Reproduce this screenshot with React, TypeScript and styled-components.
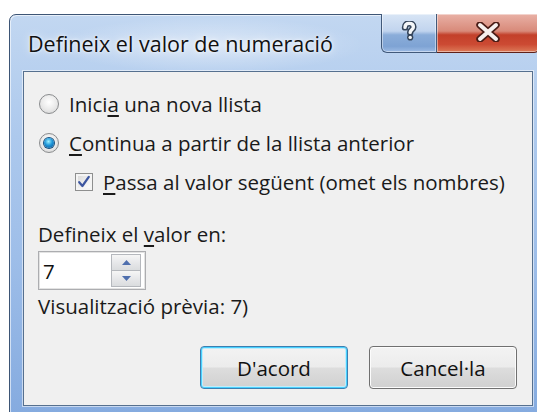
import React from 'react';
import styled, { createGlobalStyle } from 'styled-components';

const uiFont = `'Open Sans', 'Noto Sans', 'Liberation Sans', sans-serif`;

const GlobalStyle = createGlobalStyle`
  html, body {
    margin: 0;
    padding: 0;
    background: #ffffff;
    overflow: hidden;
  }
  body {
    font-family: ${uiFont};
  }
`;

const Window = styled.div`
  box-sizing: border-box;
  width: 538px;
  height: 406px;
  margin: 14px 0 0 9px;
  display: flex;
  flex-direction: column;
  border: 1px solid #3d5575;
  border-radius: 7px 7px 0 0;
  background:
    radial-gradient(ellipse 220px 40px at 200px 30px, rgba(255, 255, 255, 0.45), rgba(255, 255, 255, 0) 70%),
    linear-gradient(180deg, #c2d7f1 0%, #adc9ed 30%, #9ebee9 60%, #84aadf 100%);
  box-shadow: inset 1px 1px 0 rgba(255, 255, 255, 0.6);
`;

const TitleBar = styled.div`
  height: 56px;
  display: flex;
  align-items: flex-start;
  padding-left: 18px;
`;

const Title = styled.div`
  align-self: center;
  font-size: 21.5px;
  color: #111;
  text-shadow: 0 0 8px rgba(255, 255, 255, 0.9), 0 0 3px rgba(255, 255, 255, 0.9);
  margin-top: 1px;
  white-space: nowrap;
`;

const Controls = styled.div`
  margin-left: auto;
  margin-right: 6px;
  display: flex;
  margin-top: -1px;
`;

const CaptionButton = styled.div<{ $w: number; $tone: 'blue' | 'red' }>`
  box-sizing: border-box;
  width: ${(p) => p.$w}px;
  height: 39px;
  padding-bottom: 3px;
  display: flex;
  align-items: center;
  justify-content: center;
  border: 1px solid ${(p) => (p.$tone === 'red' ? '#5f2018' : '#41597a')};
  border-top: none;
  background: ${(p) =>
    p.$tone === 'red'
      ? 'linear-gradient(180deg, #e9b1a6 0%, #d88a7a 45%, #c3402a 55%, #cc4a33 80%, #dc7a58 100%)'
      : 'linear-gradient(180deg, #d8e5f5 0%, #c1d4ee 45%, #8badd9 55%, #7ea3d4 85%, #9dbbe4 100%)'};
  box-shadow: inset 0 0 0 1px rgba(255, 255, 255, 0.45);
  &:first-child {
    border-radius: 0 0 0 6px;
  }
  &:last-child {
    border-radius: 0 0 6px 0;
    border-left: none;
  }
`;

const Client = styled.div`
  box-sizing: border-box;
  margin: 0 13px 13px 13px;
  flex: 1;
  border: 1px solid #56708f;
  background: #f0f0f0;
  box-shadow: 0 0 0 1px rgba(255, 255, 255, 0.55);
  display: flex;
  flex-direction: column;
  padding: 12px 15px 16px 14px;
  font-size: 20.5px;
  color: #1a1a1a;
`;

const OptionRow = styled.label<{ $indent?: number }>`
  height: 39px;
  display: flex;
  align-items: center;
  gap: 10px;
  padding-left: ${(p) => p.$indent ?? 1}px;
  white-space: nowrap;
`;

const RadioDot = styled.span<{ $on?: boolean }>`
  box-sizing: border-box;
  width: 20px;
  height: 20px;
  border-radius: 50%;
  border: 1px solid #8a8c8e;
  background: radial-gradient(circle at 50% 40%, #ffffff 0%, #e9e9e9 55%, #cfcfcf 100%);
  display: flex;
  align-items: center;
  justify-content: center;
  flex-shrink: 0;
  &::after {
    content: '';
    display: ${(p) => (p.$on ? 'block' : 'none')};
    width: 10px;
    height: 10px;
    border-radius: 50%;
    background: radial-gradient(circle at 45% 35%, #9ef0ff 0%, #1e96d8 45%, #0b4f92 100%);
    box-shadow: 0 0 0 1px #17507f;
  }
`;

const CheckBox = styled.span`
  box-sizing: border-box;
  width: 18px;
  height: 18px;
  border: 1px solid #8e8f8f;
  background: linear-gradient(135deg, #d5d5d5 0%, #f2f2f2 60%, #ffffff 100%);
  box-shadow: inset 0 0 0 2px #f4f4f4;
  display: flex;
  align-items: center;
  justify-content: center;
  flex-shrink: 0;
`;

const Key = styled.span`
  text-decoration: underline;
  text-underline-offset: 3px;
`;

const FieldLabel = styled.div`
  margin-top: 21px;
  height: 24px;
  line-height: 24px;
`;

const Spinner = styled.div`
  box-sizing: border-box;
  margin-top: 5px;
  width: 108px;
  height: 39px;
  border: 1px solid #acadb0;
  background: #ffffff;
  box-shadow: inset 0 0 0 1px #e3e3e3;
  display: flex;
  align-items: center;
  padding: 3px 4px 3px 4px;
`;

const SpinValue = styled.span`
  flex: 1;
  font-size: 20.5px;
  color: #111;
`;

const SpinButtons = styled.div`
  width: 30px;
  height: 33px;
  display: flex;
  flex-direction: column;
`;

const SpinButton = styled.div`
  box-sizing: border-box;
  flex: 1;
  border: 1px solid #b5b8bd;
  background: linear-gradient(180deg, #f6f6f6 0%, #e7e8ea 50%, #dadcde 100%);
  display: flex;
  align-items: center;
  justify-content: center;
  & + & {
    border-top: none;
  }
`;

const Preview = styled.div`
  margin-top: 4px;
  height: 24px;
  line-height: 24px;
`;

const ButtonRow = styled.div`
  margin-top: auto;
  display: flex;
  justify-content: flex-end;
  gap: 21px;
`;

const DialogButton = styled.button<{ $default?: boolean }>`
  box-sizing: border-box;
  width: 148px;
  height: 43px;
  font-family: ${uiFont};
  font-size: 20.5px;
  color: #111;
  border-radius: 4px;
  border: 1px solid ${(p) => (p.$default ? '#3c7fb1' : '#707070')};
  background: linear-gradient(180deg, #f3f3f3 0%, #ececec 48%, #dddddd 52%, #d0d0d0 100%);
  box-shadow: ${(p) =>
    p.$default ? 'inset 0 0 0 1px #48d1ff, inset 0 0 0 2px #c0ecfb' : 'inset 0 0 0 1px #fcfcfc'};
  padding: 0;
`;

// question mark: dark outline pass, then the white body on top
const helpHook = 'M4 6.4 C4 3.6 5.8 2.4 8.2 2.4 C10.8 2.4 12.4 3.8 12.4 5.9 C12.4 8.5 9.2 8.8 9.2 11.4';

const HelpGlyph = () => (
  <svg width="17" height="21" viewBox="0 0 17 21">
    <path d={helpHook} fill="none" stroke="#34445a" strokeWidth="6.4" strokeLinecap="round" />
    <circle cx="9.2" cy="16.4" r="3.1" fill="#34445a" />
    <path d={helpHook} fill="none" stroke="#f4f6f8" strokeWidth="3.4" strokeLinecap="round" />
    <circle cx="9.2" cy="16.4" r="1.7" fill="#f4f6f8" />
  </svg>
);

const CloseGlyph = () => (
  <svg width="26" height="20" viewBox="0 0 26 20">
    <path d="M5 3 L21 17 M21 3 L5 17" stroke="#4a1c16" strokeWidth="7.4" strokeLinecap="round" />
    <path d="M5 3 L21 17 M21 3 L5 17" stroke="#f6f0ee" strokeWidth="4" strokeLinecap="round" />
  </svg>
);

const CheckMark = () => (
  <svg width="14" height="14" viewBox="0 0 14 14">
    <path
      d="M2.2 7.2 L5.4 11 L11.8 1.8"
      fill="none"
      stroke="#3d56a0"
      strokeWidth="2.2"
      strokeLinecap="round"
      strokeLinejoin="round"
    />
  </svg>
);

const Arrow = ({ up }: { up?: boolean }) => (
  <svg width="9" height="5" viewBox="0 0 9 5">
    <path d={up ? 'M0 5 L4.5 0 L9 5 Z' : 'M0 0 L4.5 5 L9 0 Z'} fill="#4f6fae" />
  </svg>
);

export default function App() {
  return (
    <>
      <GlobalStyle />
      <Window>
        <TitleBar>
          <Title>Defineix el valor de numeració</Title>
          <Controls>
            <CaptionButton $w={56} $tone="blue">
              <HelpGlyph />
            </CaptionButton>
            <CaptionButton $w={103} $tone="red">
              <CloseGlyph />
            </CaptionButton>
          </Controls>
        </TitleBar>
        <Client>
          <OptionRow>
            <RadioDot />
            <span>
              Inici<Key>a</Key> una nova llista
            </span>
          </OptionRow>
          <OptionRow>
            <RadioDot $on />
            <span>
              <Key>C</Key>ontinua a partir de la llista anterior
            </span>
          </OptionRow>
          <OptionRow $indent={37}>
            <CheckBox>
              <CheckMark />
            </CheckBox>
            <span>
              <Key>P</Key>assa al valor següent (omet els nombres)
            </span>
          </OptionRow>
          <FieldLabel>
            Defineix el <Key>v</Key>alor en:
          </FieldLabel>
          <Spinner>
            <SpinValue>7</SpinValue>
            <SpinButtons>
              <SpinButton>
                <Arrow up />
              </SpinButton>
              <SpinButton>
                <Arrow />
              </SpinButton>
            </SpinButtons>
          </Spinner>
          <Preview>Visualització prèvia: 7)</Preview>
          <ButtonRow>
            <DialogButton $default>D'acord</DialogButton>
            <DialogButton>Cancel·la</DialogButton>
          </ButtonRow>
        </Client>
      </Window>
    </>
  );
}
